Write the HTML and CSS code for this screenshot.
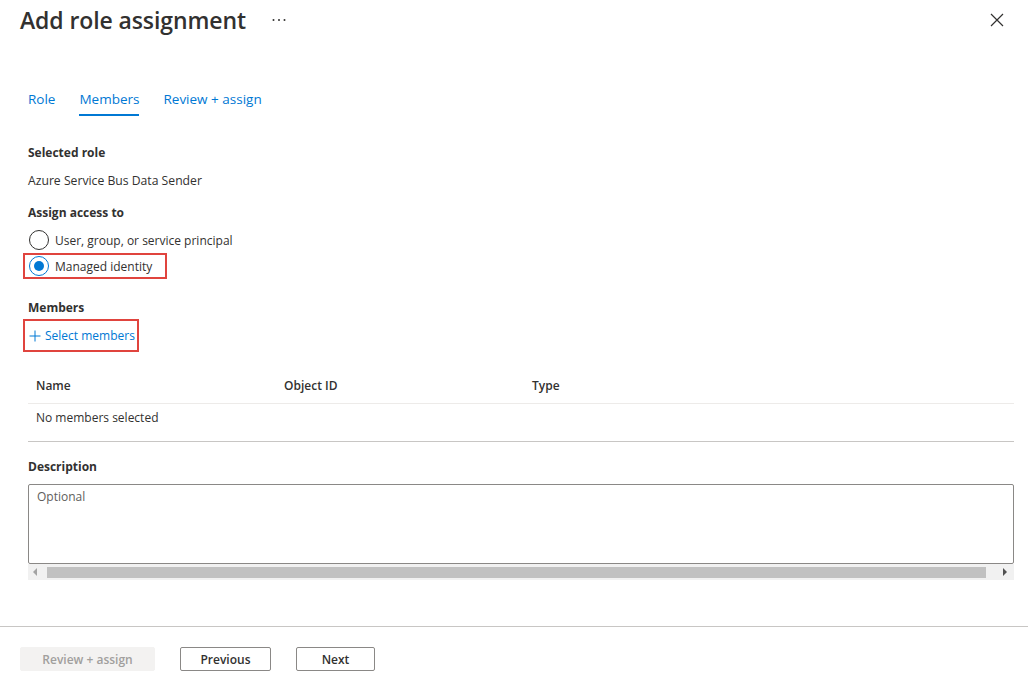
FILE: index.html
```html
<!DOCTYPE html>
<html lang="en">
<head>
<meta charset="utf-8">
<title>Add role assignment</title>
<link rel="stylesheet" href="styles.css">
</head>
<body>
<div class="panel">
  <header class="head">
    <h1 class="title">Add role assignment</h1>
    <button class="more" aria-label="More">
      <svg width="14" height="4" viewBox="0 0 14 4"><circle cx="1.5" cy="2" r="1" fill="#323130"/><circle cx="7" cy="2" r="1" fill="#323130"/><circle cx="12.5" cy="2" r="1" fill="#323130"/></svg>
    </button>
    <button class="close" aria-label="Close">
      <svg width="14" height="14" viewBox="0 0 14 14"><path d="M1 1L13 13M13 1L1 13" stroke="#323130" stroke-width="1.2" fill="none"/></svg>
    </button>
  </header>

  <main class="content">
    <nav class="tabs">
      <a class="tab">Role</a>
      <a class="tab active">Members</a>
      <a class="tab">Review + assign</a>
    </nav>

    <div class="label first">Selected role</div>
    <div class="value">Azure Service Bus Data Sender</div>

    <div class="label assign">Assign access to</div>
    <div class="radios">
      <div class="radio"><span class="circle"></span><span>User, group, or service principal</span></div>
      <div class="radio checked highlight"><span class="circle"><span class="dot"></span></span><span>Managed identity</span></div>
    </div>

    <div class="label members">Members</div>
    <div class="select highlight">
      <svg class="plus" width="12" height="12" viewBox="0 0 12 12"><path d="M6 0.5V11.5M0.5 6H11.5" stroke="#0078d4" stroke-width="1" fill="none"/></svg>
      <span>Select members</span>
    </div>

    <div class="table">
      <div class="thead">
        <div class="cell">Name</div>
        <div class="cell">Object ID</div>
        <div class="cell">Type</div>
      </div>
      <div class="trow">
        <div class="cell">No members selected</div>
      </div>
    </div>

    <div class="label desc">Description</div>
    <textarea class="textarea" placeholder="Optional"></textarea>
    <div class="hscroll">
      <span class="arrow left"></span>
      <span class="thumb"></span>
      <span class="arrow right"></span>
    </div>
  </main>

  <footer class="foot">
    <button class="btn disabled">Review + assign</button>
    <button class="btn">Previous</button>
    <button class="btn next">Next</button>
  </footer>
</div>
</body>
</html>
```

FILE: styles.css
```css
* { box-sizing: border-box; }
html, body { margin: 0; padding: 0; background: #fff; }
body {
  font-family: "Open Sans", "Noto Sans", sans-serif;
  font-size: 12px;
  color: #323130;
  width: 1028px;
  height: 688px;
  overflow: hidden;
}
button { font-family: inherit; }

.head {
  display: flex;
  align-items: center;
  height: 40px;
  padding-left: 20px;
}
.title {
  margin: 0;
  font-size: 23px;
  font-weight: 600;
  line-height: 40px;
  color: #323130;
  letter-spacing: -0.1px;
}
.more {
  border: 0;
  background: none;
  padding: 0;
  margin-left: 26px;
  height: 14px;
  display: flex;
  align-items: center;
}
.close {
  border: 0;
  background: none;
  padding: 0;
  margin-left: auto;
  margin-right: 24px;
  width: 14px;
  height: 14px;
  display: flex;
}

.content {
  padding: 0 14px 0 28px;
}

.tabs {
  display: flex;
  gap: 24px;
  margin-top: 44px;
}
.tab {
  font-size: 13.5px;
  line-height: 30px;
  color: #0078d4;
  border-bottom: 2px solid transparent;
  cursor: pointer;
}
.tab.active { border-bottom-color: #0078d4; }

.label {
  font-weight: 700;
  line-height: 20px;
}
.label.first { margin-top: 27px; }
.value { line-height: 20px; margin-top: 8px; font-size: 12.2px; }
.label.assign { margin-top: 12px; }

.radios {
  margin-top: 4px;
  margin-left: -5px;
}
.radio {
  display: flex;
  align-items: center;
  width: fit-content;
  height: 26px;
  padding: 0 8px 0 4px;
  border: 2px solid transparent;
}
.radio .circle {
  width: 20px;
  height: 20px;
  border: 1px solid #323130;
  border-radius: 50%;
  margin-right: 6px;
  display: flex;
  align-items: center;
  justify-content: center;
}
.radio.checked .circle { border-color: #0078d4; }
.dot {
  width: 10px;
  height: 10px;
  border-radius: 50%;
  background: #0078d4;
}
.highlight { border: 2px solid #e0443e !important; }
.radio.highlight { width: 144px; }

.label.members { margin-top: 19px; }

.select {
  display: flex;
  align-items: center;
  width: 116px;
  height: 33px;
  margin-left: -5px;
  padding-left: 4px;
  color: #0078d4;
  margin-top: 1px;
}
.select .plus { margin-right: 4px; }

.table { margin-top: 16px; }
.thead {
  display: flex;
  height: 36px;
  align-items: center;
  border-bottom: 1px solid #edebe9;
  font-weight: 600;
}
.trow {
  height: 38px;
  padding-top: 1px;
  line-height: 26px;
  border-bottom: 1px solid #c8c6c4;
}
.cell {
  width: 248px;
  padding-left: 8px;
}

.label.desc { margin-top: 15px; }

.textarea {
  display: block;
  width: 100%;
  height: 80px;
  margin: 7px 0 0;
  border: 1px solid #8a8886;
  border-radius: 2px;
  padding: 2px 8px;
  font-family: inherit;
  font-size: 12px;
  line-height: 20px;
  color: #323130;
  resize: none;
  outline: none;
}
.textarea::placeholder { color: #605e5c; }

.hscroll {
  display: flex;
  align-items: center;
  height: 16px;
  background: #f1f1f1;
}
.thumb {
  height: 11px;
  background: #c1c1c1;
  margin-left: 10px;
  width: 939px;
}
.arrow {
  width: 0;
  height: 0;
  border-top: 4px solid transparent;
  border-bottom: 4px solid transparent;
}
.arrow.left { border-right: 4px solid #a3a3a3; margin-left: 5px; }
.arrow.right { border-left: 4px solid #505050; margin-left: auto; margin-right: 7px; }

.foot {
  margin-top: 46px;
  border-top: 1px solid #c8c6c4;
  padding: 20px 0 0 20px;
  display: flex;
  gap: 25px;
}
.btn {
  height: 24px;
  border: 1px solid #8a8886;
  border-radius: 2px;
  background: #fff;
  font-size: 12px;
  font-weight: 600;
  color: #323130;
  padding: 0;
  width: 91px;
}
.btn.disabled {
  width: 135px;
  border-color: #f3f2f1;
  background: #f3f2f1;
  color: #a19f9d;
}
.btn.next { width: 79px; }
```
